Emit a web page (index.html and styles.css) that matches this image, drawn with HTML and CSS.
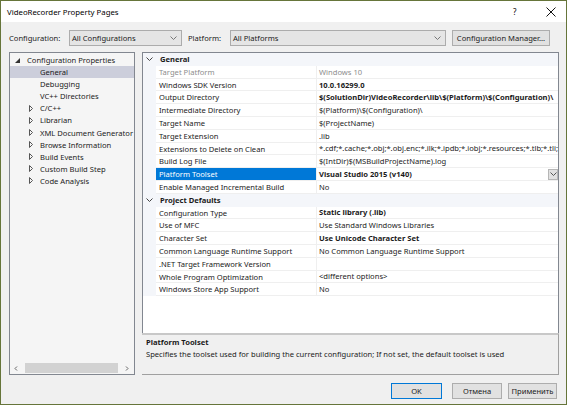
FILE: index.html
```html
<!DOCTYPE html>
<html lang="en">
<head>
    <meta charset="UTF-8">
    <title>VideoRecorder Property Pages</title>
    <link rel="stylesheet" href="styles.css">
</head>
<body>
<div class="window">
    <div class="titlebar">
        <span class="title">VideoRecorder Property Pages</span>
        <span class="help">?</span>
        <svg class="close" width="10" height="10" viewBox="0 0 10 10"><path d="M0.5 0.5L9.5 9.5M9.5 0.5L0.5 9.5" stroke="#111" stroke-width="1" fill="none"/></svg>
    </div>

    <div class="toolbar">
        <span class="label">Configuration:</span>
        <div class="combo combo-config">
            <span>All Configurations</span>
            <svg width="7" height="4" viewBox="0 0 7 4"><path d="M0.5 0.5L3.5 3.5L6.5 0.5" stroke="#777" fill="none"/></svg>
        </div>
        <span class="label label-platform">Platform:</span>
        <div class="combo combo-platform">
            <span>All Platforms</span>
            <svg width="7" height="4" viewBox="0 0 7 4"><path d="M0.5 0.5L3.5 3.5L6.5 0.5" stroke="#777" fill="none"/></svg>
        </div>
        <button class="btn btn-manager">Configuration Manager...</button>
    </div>

    <div class="main">
        <div class="tree">
            <div class="tree-list">
                <div class="node root">
                    <svg class="exp" width="5" height="5" viewBox="0 0 5 5"><path d="M5 0L5 5L0 5Z" fill="#333"/></svg>
                    Configuration Properties
                </div>
                <div class="node leaf selected">General</div>
                <div class="node leaf">Debugging</div>
                <div class="node leaf">VC++ Directories</div>
                <div class="node child"><svg class="col" width="4" height="7" viewBox="0 0 4 7"><path d="M0.5 0.5L3.5 3.5L0.5 6.5Z" stroke="#555" fill="none"/></svg>C/C++</div>
                <div class="node child"><svg class="col" width="4" height="7" viewBox="0 0 4 7"><path d="M0.5 0.5L3.5 3.5L0.5 6.5Z" stroke="#555" fill="none"/></svg>Librarian</div>
                <div class="node child"><svg class="col" width="4" height="7" viewBox="0 0 4 7"><path d="M0.5 0.5L3.5 3.5L0.5 6.5Z" stroke="#555" fill="none"/></svg>XML Document Generator</div>
                <div class="node child"><svg class="col" width="4" height="7" viewBox="0 0 4 7"><path d="M0.5 0.5L3.5 3.5L0.5 6.5Z" stroke="#555" fill="none"/></svg>Browse Information</div>
                <div class="node child"><svg class="col" width="4" height="7" viewBox="0 0 4 7"><path d="M0.5 0.5L3.5 3.5L0.5 6.5Z" stroke="#555" fill="none"/></svg>Build Events</div>
                <div class="node child"><svg class="col" width="4" height="7" viewBox="0 0 4 7"><path d="M0.5 0.5L3.5 3.5L0.5 6.5Z" stroke="#555" fill="none"/></svg>Custom Build Step</div>
                <div class="node child"><svg class="col" width="4" height="7" viewBox="0 0 4 7"><path d="M0.5 0.5L3.5 3.5L0.5 6.5Z" stroke="#555" fill="none"/></svg>Code Analysis</div>
            </div>
            <div class="hscroll">
                <svg width="4" height="5" viewBox="0 0 4 5"><path d="M3 0.5L1 2.5L3 4.5" stroke="#666" fill="none"/></svg>
                <div class="thumb"></div>
                <svg width="4" height="5" viewBox="0 0 4 5"><path d="M1 0.5L3 2.5L1 4.5" stroke="#666" fill="none"/></svg>
            </div>
        </div>

        <div class="right">
            <div class="grid">
                <div class="cat">
                    <svg class="chev" width="7" height="4" viewBox="0 0 7 4"><path d="M0.5 0.5L3.5 3.5L6.5 0.5" stroke="#444" fill="none"/></svg>
                    General
                </div>
                <div class="prop dim"><div class="name">Target Platform</div><div class="value">Windows 10</div></div>
                <div class="prop"><div class="name">Windows SDK Version</div><div class="value bold">10.0.16299.0</div></div>
                <div class="prop"><div class="name">Output Directory</div><div class="value bold">$(SolutionDir)VideoRecorder\lib\$(Platform)\$(Configuration)\</div></div>
                <div class="prop"><div class="name">Intermediate Directory</div><div class="value">$(Platform)\$(Configuration)\</div></div>
                <div class="prop"><div class="name">Target Name</div><div class="value">$(ProjectName)</div></div>
                <div class="prop"><div class="name">Target Extension</div><div class="value">.lib</div></div>
                <div class="prop"><div class="name">Extensions to Delete on Clean</div><div class="value">*.cdf;*.cache;*.obj;*.obj.enc;*.ilk;*.ipdb;*.iobj;*.resources;*.tlb;*.tli;*.tlh;*.tmp;*.rsp</div></div>
                <div class="prop"><div class="name">Build Log File</div><div class="value">$(IntDir)$(MSBuildProjectName).log</div></div>
                <div class="prop active">
                    <div class="name">Platform Toolset</div>
                    <div class="value bold">Visual Studio 2015 (v140)
                        <span class="drop"><svg width="7" height="4" viewBox="0 0 7 4"><path d="M0.5 0.5L3.5 3.5L6.5 0.5" stroke="#555" fill="none"/></svg></span>
                    </div>
                </div>
                <div class="prop"><div class="name">Enable Managed Incremental Build</div><div class="value">No</div></div>
                <div class="cat">
                    <svg class="chev" width="7" height="4" viewBox="0 0 7 4"><path d="M0.5 0.5L3.5 3.5L6.5 0.5" stroke="#444" fill="none"/></svg>
                    Project Defaults
                </div>
                <div class="prop"><div class="name">Configuration Type</div><div class="value bold">Static library (.lib)</div></div>
                <div class="prop"><div class="name">Use of MFC</div><div class="value">Use Standard Windows Libraries</div></div>
                <div class="prop"><div class="name">Character Set</div><div class="value bold">Use Unicode Character Set</div></div>
                <div class="prop"><div class="name">Common Language Runtime Support</div><div class="value">No Common Language Runtime Support</div></div>
                <div class="prop"><div class="name">.NET Target Framework Version</div><div class="value"></div></div>
                <div class="prop"><div class="name">Whole Program Optimization</div><div class="value">&lt;different options&gt;</div></div>
                <div class="prop"><div class="name">Windows Store App Support</div><div class="value">No</div></div>
            </div>
            <div class="desc">
                <div class="desc-title">Platform Toolset</div>
                <div class="desc-text">Specifies the toolset used for building the current configuration; If not set, the default toolset is used</div>
            </div>
        </div>
    </div>

    <div class="footer">
        <button class="btn btn-ok">OK</button>
        <button class="btn btn-cancel">Отмена</button>
        <button class="btn btn-apply">Применить</button>
    </div>
</div>
</body>
</html>
```

FILE: styles.css
```css
* {
    box-sizing: border-box;
}
body {
    margin: 0;
    font-family: "Noto Sans", "Open Sans", sans-serif;
    font-size: 7.6px;
    color: #1b1b1b;
}
.window {
    width: 567px;
    height: 405px;
    border: 1px solid #66753a;
    background: #f0f0f0;
    display: flex;
    flex-direction: column;
}
.titlebar {
    height: 21px;
    background: #fff;
    display: flex;
    align-items: center;
    padding: 0 0 0 6px;
    font-size: 7.8px;
    color: #000;
}
.title {
    flex: 1;
}
.help {
    width: 33px;
    font-size: 8px;
}
.close {
    margin-right: 10px;
}
.toolbar {
    display: flex;
    align-items: center;
    height: 16px;
    margin-top: 8px;
    padding-left: 8px;
}
.label {
    width: 60px;
}
.label-platform {
    width: 42px;
    margin-left: 6px;
}
.combo {
    height: 16px;
    background: #e5e5e5;
    border: 1px solid #acacac;
    display: flex;
    align-items: center;
    justify-content: space-between;
    padding: 0 4px 0 2px;
}
.combo-config {
    width: 113px;
}
.combo-platform {
    width: 216px;
}
.btn {
    font-family: inherit;
    font-size: 7.6px;
    height: 16px;
    background: #e1e1e1;
    border: 1px solid #adadad;
    color: #1b1b1b;
    padding: 0;
}
.btn-manager {
    width: 98px;
    margin-left: 6px;
}
.main {
    display: flex;
    height: 323px;
    margin-top: 6px;
    padding-left: 8px;
}
.tree {
    width: 126px;
    border: 1px solid #828790;
    background: #f5f5f5;
    display: flex;
    flex-direction: column;
}
.tree-list {
    flex: 1;
    padding-top: 1px;
}
.node {
    height: 12.1px;
    line-height: 12.1px;
    white-space: nowrap;
    display: flex;
    align-items: center;
}
.root {
    padding-left: 5px;
}
.root .exp {
    margin-right: 7px;
}
.leaf {
    padding-left: 30px;
}
.child {
    padding-left: 19px;
}
.child .col {
    margin-right: 7px;
}
.selected {
    background: #cccedb;
}
.hscroll {
    height: 10px;
    margin: 0 0 1px 0;
    display: flex;
    align-items: center;
    padding: 0 5px 0 4px;
    gap: 7px;
}
.thumb {
    flex: 1;
    height: 10px;
    background: #d2d2d2;
}
.right {
    width: 417px;
    margin-left: 7px;
    display: flex;
    flex-direction: column;
}
.grid {
    height: 281px;
    background: #fff;
    border: 1px solid #828790;
    border-bottom: none;
    overflow: hidden;
}
.cat {
    height: 12.8px;
    background: #f4f6fa;
    font-weight: bold;
    display: flex;
    align-items: center;
    padding-left: 3px;
    border-bottom: 1px solid #f4f6fa;
}
.chev {
    margin-right: 7px;
}
.prop {
    height: 12.8px;
    display: flex;
    border-left: 13px solid #f4f6fa;
}
.name, .value {
    height: 12.8px;
    line-height: 12px;
    border-bottom: 1px solid #efefef;
    white-space: nowrap;
    overflow: hidden;
}
.name {
    width: 160px;
    flex: none;
    padding-left: 3px;
}
.value {
    flex: 1;
    border-left: 1px solid #efefef;
    padding-left: 2px;
    display: flex;
    align-items: center;
}
.bold {
    font-weight: bold;
}
.dim .name, .dim .value {
    color: #8d8d8d;
}
.active .name {
    background: #0078d7;
    color: #fff;
}
.drop {
    margin-left: auto;
    width: 10px;
    height: 11px;
    background: #e1e1e1;
    border: 1px solid #b6b6b6;
    display: flex;
    align-items: center;
    justify-content: center;
}
.desc {
    flex: 1;
    border-top: 2px solid #c8c8c8;
    border-right: 1px solid #a0a0a0;
    border-bottom: 1px solid #a0a0a0;
    padding: 1px 4px;
}
.desc-title {
    font-weight: bold;
    line-height: 12px;
}
.desc-text {
    line-height: 13px;
}
.footer {
    display: flex;
    justify-content: flex-end;
    margin-top: 8px;
    padding-right: 9px;
}
.btn-ok {
    width: 51px;
    border-color: #0078d7;
}
.btn-cancel {
    width: 50px;
    margin-left: 10px;
}
.btn-apply {
    width: 49px;
    margin-left: 6px;
}
```
